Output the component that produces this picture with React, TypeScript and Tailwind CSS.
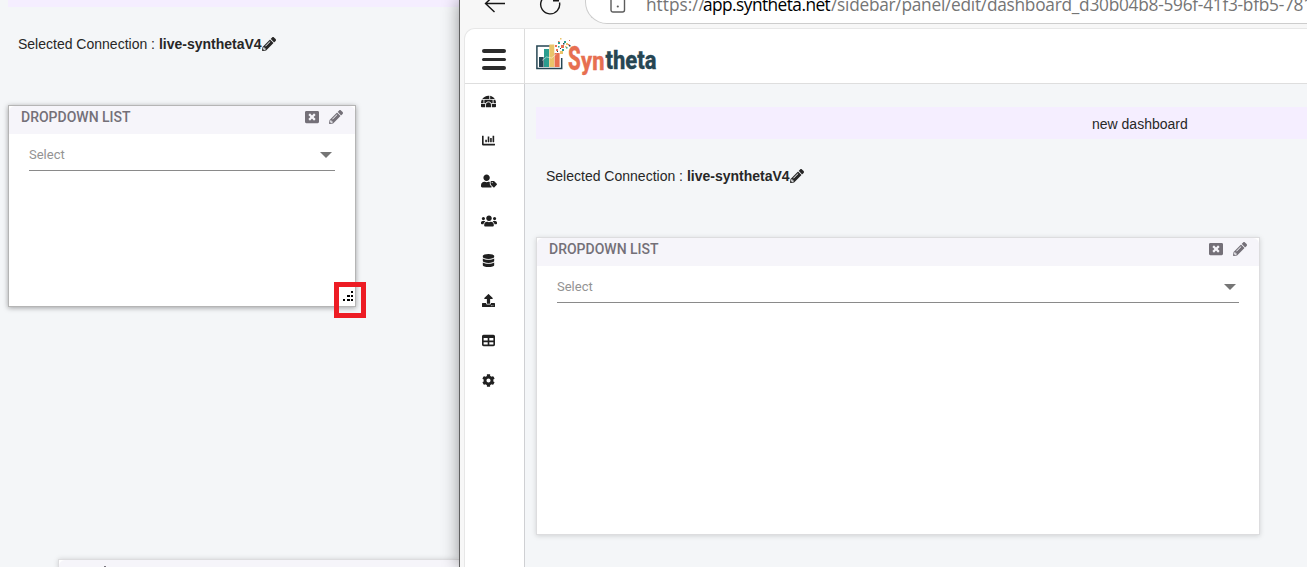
import type { ReactNode } from "react";
import {
  FaPencilAlt,
  FaWindowClose,
  FaIgloo,
  FaChartBar,
  FaUserTag,
  FaUsers,
  FaDatabase,
  FaUpload,
  FaCog,
} from "react-icons/fa";
import { FaTable } from "react-icons/fa6";

const NAV = [FaIgloo, FaChartBar, FaUserTag, FaUsers, FaDatabase, FaUpload, FaTable, FaCog];
const NAV_SIZES = [15, 13, 16, 16, 13, 13, 13, 13];

function Connection() {
  return (
    <div className="flex h-5 items-center whitespace-pre font-['Liberation_Sans',sans-serif] text-[14px] leading-5 text-[#272727]">
      <span>Selected Connection : </span>
      <b>live-synthetaV4</b>
      <FaPencilAlt size={14} />
    </div>
  );
}

function DropdownCard({ className, children }: { className: string; children?: ReactNode }) {
  return (
    <section className={`relative border bg-white font-[Roboto,sans-serif] ${className}`}>
      <header className="flex h-[28px] items-start justify-between rounded-t-md bg-[#f6f5fa] pr-[12px] pl-[12px] text-[#747078]">
        <h2 className="mt-[1px] text-[14px] leading-[20px] font-medium">DROPDOWN LIST</h2>
        <div className="mt-[4px] flex items-center gap-[10px]">
          <FaWindowClose size={14} />
          <FaPencilAlt size={14} />
        </div>
      </header>
      <div className="mx-[20px] flex h-[37px] items-start justify-between border-b border-[#8a8a8a] pt-[11px] pr-[3px]">
        <span className="text-[13px] leading-[20px] text-[#939393]">Select</span>
        <svg className="mt-[7px]" width="12" height="6" viewBox="0 0 12 6">
          <path d="M0 0h12L6 6z" fill="#757575" />
        </svg>
      </div>
      {children}
    </section>
  );
}

function ResizeGrip() {
  const dots = [[8, 0], [4, 4], [8, 4], [0, 8], [4, 8], [8, 8]];
  return (
    <div className="absolute right-[-11px] bottom-[-12px] h-[36px] w-[32px] border-[5px] border-[#ed1c24]">
      <svg className="absolute top-[4px] left-[4px]" width="11" height="11" viewBox="0 0 11 11" shapeRendering="crispEdges">
        {dots.map(([x, y]) => (
          <rect key={`${x}-${y}`} x={x} y={y} width={x === 4 ? 3 : 2} height="2" fill="#000" />
        ))}
      </svg>
    </div>
  );
}

function Logo() {
  return (
    <svg width="124" height="40" viewBox="0 0 124 40">
      <path d="M14 8H.9v22.6h24.8V20" fill="none" stroke="#264653" strokeWidth="1.5" />
      <path d="M3 19h4.6v10H3z" fill="#264653" />
      <path d="M8 11h5v18H8z" fill="#2a9d8f" />
      <path d="M13.3 6.5h5V29h-5z" fill="#e9c46a" />
      <path d="M18.6 15h5v14h-5z" fill="#e76f51" />
      <path d="M6 22.5l4.500-3.500 5 1 5-4" fill="none" stroke="#fff" strokeWidth="0.5" />
      <g fill="#e76f51">
        <path d="M19 7h2v2h-2zM25 7h3v3h-3zM22 3h1.500v1.500H22zM33 2h1v1h-1zM20 11h2v2h-2zM32 6h1.500v1.500H32z" />
      </g>
      <g fill="#2a9d8f">
        <path d="M22 4h2v2h-2zM28 3h2v2h-2zM26 11h2v2h-2zM30 9h1.500v1.500H30zM22 8h1.500v1.500H22z" />
      </g>
      <g fill="#e9c46a">
        <path d="M24 0h1.500v1.500H24zM30 5h2v2h-2zM24 13h3v3h-3zM29 8h1.500v1.500H29z" />
      </g>
      <g fill="#264653">
        <path d="M27 5h1.500v1.500H27zM33 7h1.500v1.500H33zM24 10h1v1h-1zM21 13h1v1h-1z" />
      </g>
      <g fontFamily="Roboto, sans-serif" fontWeight="800" strokeWidth="0.300">
        <text transform="translate(32 31.500) scale(.75 1)" fontSize="33" textLength="17" lengthAdjust="spacingAndGlyphs" fill="#e76f51" stroke="#e76f51">S</text>
        <text x="45" y="31.500" fontSize="26" textLength="23.500" lengthAdjust="spacingAndGlyphs" fill="#e76f51" stroke="#e76f51">yn</text>
        <text x="69.500" y="31" fontSize="25.500" textLength="51" lengthAdjust="spacingAndGlyphs" fill="#264653" stroke="#264653">theta</text>
      </g>
    </svg>
  );
}

function BrowserBar() {
  return (
    <div className="flex h-[28px] shrink-0 items-start bg-[#f7f7f7]">
      <svg className="ml-[23px] shrink-0" width="80" height="18" viewBox="0 0 80 18" fill="none" stroke="#161616" strokeWidth="1.4">
        <path d="M22 3.500H2.500M11.500-5 2.500 3.500l9 8.500" />
        <path d="M76.500 2.500a9.500 9.500 0 1 1-4-6M70 .8h6" />
      </svg>
      <div className="-mt-[20px] ml-[22px] flex h-[44px] flex-1 shrink-0 items-start overflow-hidden rounded-l-full border border-r-0 border-[#cdcdcd] bg-white">
        <svg className="mt-[16px] ml-[24px] shrink-0" width="16" height="16" viewBox="0 0 16 16" fill="none" stroke="#5c5c5c" strokeWidth="1.400">
          <rect x="1" y="1.200" width="13.500" height="13.800" rx="2" />
          <circle cx="7.800" cy="9.500" r="1.100" fill="#5c5c5c" stroke="none" />
        </svg>
        <div className="mt-[12px] ml-[20px] flex whitespace-nowrap font-['Open_Sans',sans-serif] text-[17.3px] leading-[24px] text-[#757575]">
          <span className="w-[57px] shrink-0">https://</span>
          <span className="w-[128px] shrink-0 tracking-[-0.55px] text-black">app.syntheta.net</span>
          <span className="tracking-[-0.26px]">/sidebar/panel/edit/dashboard_d30b04b8-596f-41f3-bfb5-781</span>
        </div>
      </div>
    </div>
  );
}

export default function App() {
  return (
    <div className="flex h-[567px] w-[1307px] overflow-hidden bg-[#f4f6f8]">
      <main className="flex w-[459px] shrink-0 flex-col overflow-hidden pl-[8px]">
        <div className="h-[7px] shrink-0 bg-[#f5eeff]" />
        <div className="mt-[27px] pl-[10px]">
          <Connection />
        </div>
        <DropdownCard className="mt-[51px] h-[202px] w-[348px] shrink-0 border-[#b5b5b5] shadow-[0_1px_5px_rgba(0,0,0,0.35)]">
          <ResizeGrip />
        </DropdownCard>
        <div className="mt-[252px] ml-[50px] h-[28px] shrink-0 border-t border-l border-[#dddddf] bg-white shadow-[0_0_5px_rgba(0,0,0,0.15)]">
          <div className="h-full rounded-tl-md bg-[#f6f5fa] pt-[6px] pl-[45px]">
            <div className="h-[2px] w-[2px] bg-[#77727a]" />
          </div>
        </div>
      </main>

      <div className="relative flex min-w-0 flex-1 flex-col border-l border-[#606060] bg-[#f7f7f7] shadow-[0_0_16px_rgba(0,0,0,0.4)]">
        <BrowserBar />
        <div className="ml-[4px] flex min-h-0 flex-1 flex-col overflow-hidden rounded-tl-[11px] border-t border-l border-[#e7e7e7] bg-[#f4f6f8]">
          <div className="flex h-[55px] shrink-0 border-b border-[#dedede] bg-white">
            <div className="flex w-[60px] shrink-0 flex-col gap-[5px] border-r border-[#dcdcdc] pt-[20px] pl-[17px]">
              <div className="h-[3.5px] w-[24px] rounded-sm bg-[#2c2c2c]" />
              <div className="h-[3.5px] w-[24px] rounded-sm bg-[#2c2c2c]" />
              <div className="h-[3.5px] w-[24px] rounded-sm bg-[#2c2c2c]" />
            </div>
            <div className="mt-[9px] ml-[11px]">
              <Logo />
            </div>
          </div>
          <div className="flex min-h-0 flex-1">
            <nav className="flex w-[60px] shrink-0 flex-col border-r border-[#cfd0d3] bg-white pr-[12px] text-[#202020]">
              {NAV.map((Icon, i) => (
                <div key={i} className={`flex shrink-0 items-center justify-center ${i === 0 ? "h-[34px]" : i === 1 ? "h-[43px] pt-[2px]" : i > 3 ? "h-[40px] pb-[1px]" : "h-[40px]"}`}>
                  <Icon size={NAV_SIZES[i]} />
                </div>
              ))}
            </nav>
            <div className="flex min-w-0 flex-1 flex-col pl-[11px]">
              <div className="mt-[23px] flex h-[32px] shrink-0 items-center bg-[#f5eeff] pt-[2px] pl-[556px] font-['Liberation_Sans',sans-serif] text-[14px] text-[#272727]">
                new dashboard
              </div>
              <div className="mt-[27px] pl-[10px]">
                <Connection />
              </div>
              <DropdownCard className="mt-[51px] h-[298px] w-[724px] shrink-0 border-[#dddddf] shadow-[0_1px_5px_rgba(0,0,0,0.15)]" />
            </div>
          </div>
        </div>
      </div>
    </div>
  );
}
